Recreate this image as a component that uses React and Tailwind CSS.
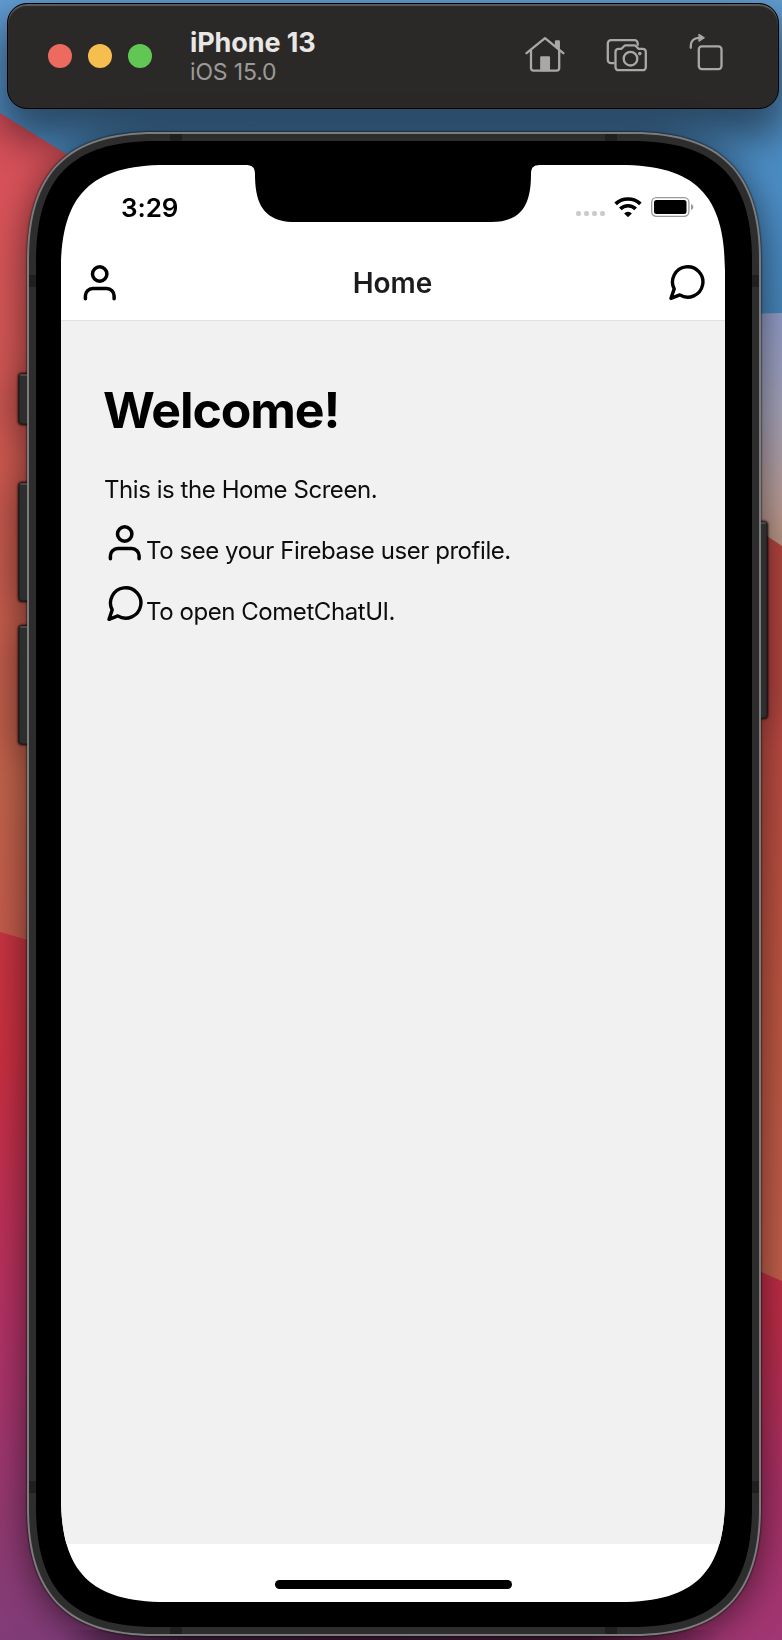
import React from "react";

const Wallpaper = () => (
  <svg className="absolute inset-0 h-full w-full" viewBox="0 0 782 1640" preserveAspectRatio="none">
    <defs>
      <linearGradient id="sky" x1="0" y1="0" x2="0" y2="1">
        <stop offset="0" stopColor="#649fd6" />
        <stop offset="0.5" stopColor="#4c8ec6" />
        <stop offset="1" stopColor="#4583b8" />
      </linearGradient>
      <linearGradient id="coral" x1="0" y1="0" x2="0" y2="1">
        <stop offset="0" stopColor="#da505c" />
        <stop offset="0.4" stopColor="#cc5850" />
        <stop offset="0.8" stopColor="#c0624a" />
        <stop offset="1" stopColor="#c45a4c" />
      </linearGradient>
      <linearGradient id="crimson" x1="0" y1="0" x2="0" y2="1">
        <stop offset="0" stopColor="#c63440" />
        <stop offset="0.18" stopColor="#c92f40" />
        <stop offset="0.42" stopColor="#bb3058" />
        <stop offset="0.6" stopColor="#ad3268" />
        <stop offset="0.85" stopColor="#8f3a72" />
        <stop offset="1" stopColor="#803c78" />
      </linearGradient>
      <linearGradient id="haze" x1="0" y1="0" x2="0" y2="1">
        <stop offset="0" stopColor="#909cc8" />
        <stop offset="0.35" stopColor="#a5a2b8" />
        <stop offset="0.75" stopColor="#bf9a8c" />
        <stop offset="1" stopColor="#bf9a8c" />
      </linearGradient>
      <linearGradient id="brick" x1="0" y1="0" x2="0" y2="1">
        <stop offset="0" stopColor="#b84640" />
        <stop offset="0.4" stopColor="#ba4842" />
        <stop offset="0.7" stopColor="#be5642" />
        <stop offset="1" stopColor="#c4604c" />
      </linearGradient>
      <linearGradient id="ruby" x1="0" y1="0" x2="0" y2="1">
        <stop offset="0" stopColor="#c22f3c" />
        <stop offset="0.4" stopColor="#bd2d48" />
        <stop offset="0.7" stopColor="#a83065" />
        <stop offset="1" stopColor="#a03673" />
      </linearGradient>
      <linearGradient id="floor" x1="0" y1="0" x2="1" y2="0">
        <stop offset="0" stopColor="#421c40" stopOpacity="0" />
        <stop offset="0.2" stopColor="#421c40" />
        <stop offset="0.8" stopColor="#4a1836" />
        <stop offset="1" stopColor="#4a1836" stopOpacity="0" />
      </linearGradient>
    </defs>
    <path d="M0 0H782V330H0Z" fill="url(#sky)" />
    <path d="M0 113L68 155L391 360V960H0Z" fill="url(#coral)" />
    <path d="M0 932L28 940L391 1050V1640H0Z" fill="url(#crimson)" />
    <path d="M391 322L782 313V600H391Z" fill="url(#haze)" />
    <path d="M391 290L767 536L782 546V1300H391Z" fill="url(#brick)" />
    <path d="M391 1110L782 1281V1640H391Z" fill="url(#ruby)" />
    <path d="M60 1630H720V1640H60Z" fill="url(#floor)" />
  </svg>
);

const UserIcon = () => (
  <svg className="h-10 w-10 shrink-0" viewBox="0 0 40 40" fill="none" stroke="#000" strokeWidth="3.5" strokeLinecap="round">
    <circle cx="20.7" cy="11" r="7.2" />
    <path d="M6.4 35.700V32.800a7.300 7.300 0 0 1 7.300-7.300H27.800a7.300 7.300 0 0 1 7.300 7.300V35.700" />
  </svg>
);

const ChatIcon = () => (
  <svg className="h-10 w-10 shrink-0" viewBox="0 0 40 40" fill="none" stroke="#000" strokeWidth="3.4" strokeLinecap="round" strokeLinejoin="round">
    <path d="M8.200 25.900A15.200 15.200 0 1 1 13.800 31.900L5 35.300Z" />
  </svg>
);

const HomeIcon = () => (
  <svg className="h-10 w-10" viewBox="0 0 40 40" fill="none" stroke="#aaa8a6" strokeWidth="2.3" strokeLinejoin="round" strokeLinecap="round">
    <path d="M1.500 19.200L20 4.200L38.300 19.200M6 16.500V34.300a2.300 2.300 0 0 0 2.300 2.300H31.900a2.300 2.300 0 0 0 2.300-2.300V16.500" />
    <path d="M31 7.500H33.800V15L31 12.500Z" fill="#aaa8a6" />
    <path d="M16.300 23.500H23.900V36H16.300Z" fill="#aaa8a6" />
  </svg>
);

const CameraIcon = () => (
  <svg className="h-10 w-[42px]" viewBox="0 -1.2 42 40" fill="none" stroke="#aaa8a6" strokeWidth="2.3" strokeLinejoin="round">
    <path d="M8.500 28H5a3.200 3.200 0 0 1-3.200-3.200V8.200A3.200 3.200 0 0 1 5 5H28.500a3.200 3.200 0 0 1 3.200 3.200V10.500" />
    <path d="M12.500 35A3 3 0 0 1 9.500 32V16.600a3 3 0 0 1 3-3H15.500L18.200 10.800a2 2 0 0 1 1.400-.6H28.400a2 2 0 0 1 1.400.6L32.500 13.600H36.800a3 3 0 0 1 3 3V32a3 3 0 0 1-3 3Z" />
    <circle cx="24.500" cy="23.500" r="6.800" />
    <circle cx="33.800" cy="18.400" r="1.800" fill="#aaa8a6" stroke="none" />
  </svg>
);

const RotateIcon = () => (
  <svg className="h-10 w-9 overflow-visible" viewBox="0 0 36 40" fill="none" stroke="#aaa8a6" strokeWidth="2.300" strokeLinecap="round" strokeLinejoin="round">
    <rect x="9.800" y="12.400" width="22.700" height="22.700" rx="3" />
    <path d="M1.800 13.800V11.400a7.600 7.600 0 0 1 7.600-7.600H11.500" />
    <path d="M10.200 .3L15.500 3.800L10.200 7.300Z" fill="#aaa8a6" strokeWidth="1" />
  </svg>
);

const WifiIcon = () => (
  <svg className="h-5 w-7" viewBox="0 0 28 20" fill="none" stroke="#000" strokeWidth="3.700">
    <path d="M1.600 6.900a18.200 18.200 0 0 1 24.800 0" />
    <path d="M6.300 11.800a11.300 11.300 0 0 1 15.400 0" />
    <path d="M10.100 16.400a5.700 5.700 0 0 1 7.800 0L14 20.200Z" fill="#000" stroke="none" />
  </svg>
);

const BatteryIcon = () => (
  <svg className="h-5 w-[43px]" viewBox="0 0 43 20" fill="none">
    <rect x="0.700" y="0.700" width="37.200" height="18.600" rx="4.700" stroke="#999" strokeWidth="1.300" />
    <rect x="3" y="3" width="32.500" height="14" rx="2.500" fill="#000" />
    <path d="M40 7v6c1.500-.5 2.300-1.600 2.300-3s-.8-2.500-2.300-3Z" fill="#999" />
  </svg>
);

const SideButton = ({ className }) => (
  <div className={"absolute border border-t-2 border-[#222] border-t-[#4a4a4a] bg-[#2d2e2e] shadow-[0_0_2px_1px_rgba(0,0,0,0.5)] " + className} />
);

const Seam = ({ className }) => <div className={"absolute bg-[#1f1f1f] " + className} />;

function TitleBar() {
  return (
    <header className="relative z-10 ml-[7px] mt-[3px] flex h-[106px] w-[772px] shrink-0 items-center rounded-[20px] border border-black bg-[#2b2927] pl-10 pr-[53px] shadow-[0_22px_42px_8px_rgba(0,0,0,0.5),inset_0_2px_1px_#5b5b5b]">
      <div className="flex gap-4">
        <span className="h-6 w-6 rounded-full bg-[#ed6a5f]" />
        <span className="h-6 w-6 rounded-full bg-[#f5be4f]" />
        <span className="h-6 w-6 rounded-full bg-[#62c655]" />
      </div>
      <div className="ml-[38px] flex flex-col pt-[2px]">
        <h1 className="text-[27px] font-bold leading-[30px] tracking-[-0.1px] text-[#e9e7e6]">iPhone 13</h1>
        <p className="text-[23px] leading-[28px] tracking-[-0.15px] text-[#9b9a98]">iOS 15.0</p>
      </div>
      <div className="mb-1 ml-auto flex items-center gap-[41px]">
        <HomeIcon />
        <CameraIcon />
        <RotateIcon />
      </div>
    </header>
  );
}

function Screen() {
  return (
    <main className="flex h-[1437px] w-[664px] flex-col bg-white [clip-path:path('M0_105C0_30_30_0_105_0H184C191_0_194_2_194_9C194_38_202_57_234_57H430C462_57_470_38_470_9C470_2_473_0_480_0H559C634_0_664_30_664_105V1332C664_1407_634_1437_559_1437H105C30_1437_0_1407_0_1332Z')]">
      <div className="flex h-[84px] items-center pl-[60px] pr-[31px]">
        <span className="pt-px text-[26px] font-semibold leading-8 tracking-[-0.1px] text-black">3:29</span>
        <div className="ml-auto flex items-center">
          <div className="mr-[9px] mt-[13px] flex gap-[3px]">
            <span className="h-[5px] w-[5px] rounded-[2px] bg-[#ccc]" />
            <span className="h-[5px] w-[5px] rounded-[2px] bg-[#ccc]" />
            <span className="h-[5px] w-[5px] rounded-[2px] bg-[#ccc]" />
            <span className="h-[5px] w-[5px] rounded-[2px] bg-[#ccc]" />
          </div>
          <WifiIcon />
          <div className="ml-[9px]"><BatteryIcon /></div>
        </div>
      </div>
      <nav className="flex h-[72px] items-center justify-between border-b border-[#e2e2e2] pb-1 pl-[18px] pr-[19px]">
        <UserIcon />
        <h2 className="text-[28px] font-semibold text-[#1c1c1e]">Home</h2>
        <ChatIcon />
      </nav>
      <section className="flex h-[1223px] flex-col bg-[#f1f1f1] pl-[43px] pt-[60px] text-2xl tracking-[-0.44px] text-[#0d0d0d]">
        <h3 className="-ml-px -mt-px text-[50px] font-bold leading-[60px] tracking-[-1.1px] text-black">Welcome!</h3>
        <p className="mt-[35px] leading-[30px]">This is the Home Screen.</p>
        <div className="mt-[18px] flex h-[43px] items-start">
          <UserIcon />
          <p className="ml-[2px] pt-[13px] leading-[30px]">To see your Firebase user profile.</p>
        </div>
        <div className="mt-[18px] flex h-[43px] items-start">
          <ChatIcon />
          <p className="ml-[2px] pt-[13px] leading-[30px]">To open CometChatUI.</p>
        </div>
      </section>
      <footer className="flex flex-1 items-start justify-center pt-[36px]">
        <div className="h-[9px] w-[237px] rounded-full bg-black" />
      </footer>
    </main>
  );
}

export default function App() {
  return (
    <div className="relative flex h-[1640px] w-[782px] flex-col overflow-hidden bg-[#4583b8] font-['Inter',sans-serif]">
      <Wallpaper />
      <TitleBar />
      <div className="relative z-20 ml-[27px] mt-[23px] h-[1504px] w-[734px] shrink-0 [filter:drop-shadow(0_0_1px_#000)_drop-shadow(0_6px_18px_rgba(0,0,0,0.55))]">
        <SideButton className="-left-[8px] top-[242px] h-[50px] w-[9px] rounded-l-[3px]" />
        <SideButton className="-left-[8px] top-[351px] h-[118px] w-[9px] rounded-l-[3px]" />
        <SideButton className="-left-[8px] top-[494px] h-[118px] w-[9px] rounded-l-[3px]" />
        <SideButton className="-right-[6px] top-[390px] h-[196px] w-[8px] rounded-r-[3px]" />
        <div className="bg-[#7c7c7c] p-[2px] [clip-path:path('M0_128C0_40_40_0_128_0H606C694_0_734_40_734_128V1376C734_1464_694_1504_606_1504H128C40_1504_0_1464_0_1376Z')]">
          <div className="relative h-[1500px] w-[730px] bg-[#2d2d2d] px-[7px] pt-[7px] [clip-path:path('M0_126C0_39_39_0_126_0H604C691_0_730_39_730_126V1374C730_1461_691_1500_604_1500H126C39_1500_0_1461_0_1374Z')]">
            <Seam className="left-[141px] top-0 h-[7px] w-3" />
            <Seam className="left-[576px] top-0 h-[7px] w-3" />
            <Seam className="bottom-0 left-[141px] h-[7px] w-3" />
            <Seam className="bottom-0 left-[576px] h-[7px] w-3" />
            <Seam className="left-0 top-[141px] h-3 w-[7px]" />
            <Seam className="right-0 top-[141px] h-3 w-[7px]" />
            <Seam className="left-0 top-[1347px] h-3 w-[7px]" />
            <Seam className="right-0 top-[1347px] h-3 w-[7px]" />
            <div className="h-[1486px] w-[716px] bg-black pl-[25px] pt-6 [clip-path:path('M0_120C0_36_36_0_120_0H596C680_0_716_36_716_120V1366C716_1450_680_1486_596_1486H120C36_1486_0_1450_0_1366Z')]">
              <Screen />
            </div>
          </div>
        </div>
      </div>
    </div>
  );
}
